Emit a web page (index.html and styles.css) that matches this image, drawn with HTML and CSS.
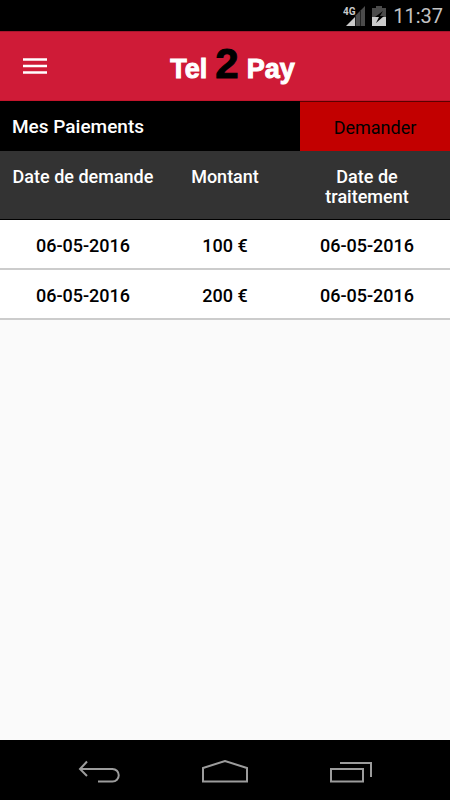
FILE: index.html
```html
<!DOCTYPE html>
<html lang="fr">
<head>
<meta charset="utf-8">
<meta name="viewport" content="width=device-width, initial-scale=1">
<title>Tel 2 Pay</title>
<link rel="stylesheet" href="styles.css">
</head>
<body>
<div class="status">
  <svg class="signal" width="22" height="20" viewBox="0 0 22 20" aria-hidden="true">
    <path d="M22 0V20H4L13 11V9L16 6Z" fill="#4b4b4b"/>
    <path d="M12 11V20H3Z" fill="#cbcbcb"/>
    <path d="M12.5 9V20M17.500 4V20" stroke="#222" fill="none"/>
    <text class="network" x="0" y="9">4G</text>
  </svg>
  <svg class="battery" width="14" height="20" viewBox="0 0 14 20" aria-hidden="true">
    <path d="M4 0H10V2H14V20H0V2H4Z" fill="#4b4b4b"/>
    <path d="M0 11H14V20H0Z" fill="#cbcbcb"/>
    <path d="M11 5L3 11H7L4 17L12 10H8Z" fill="#000"/>
  </svg>
  <time class="clock">11:37</time>
</div>
<header class="bar">
  <button class="menu" type="button" aria-label="Menu">
    <svg width="24" height="18" viewBox="0 0 24 18"><path d="M0 2.500H24M0 9H24M0 15.500H24" stroke="#fff" stroke-width="2.6"/></svg>
  </button>
  <div class="logo"><span>Tel</span><span class="two">2</span><span>Pay</span></div>
</header>
<main class="content">
  <div class="heading">
    <h1 class="title">Mes Paiements</h1>
    <button class="ask" type="button">Demander</button>
  </div>
  <table class="payments">
    <thead>
      <tr><th class="edge"></th><th>Date de demande</th><th>Montant</th><th>Date de traitement</th><th class="edge"></th></tr>
    </thead>
    <tbody>
      <tr><td></td><td>06-05-2016</td><td>100 €</td><td>06-05-2016</td><td></td></tr>
      <tr><td></td><td>06-05-2016</td><td>200 €</td><td>06-05-2016</td><td></td></tr>
    </tbody>
  </table>
</main>
<nav class="system">
  <button type="button" aria-label="Retour">
    <svg width="44" height="26" viewBox="0 0 44 26"><path d="M10 1.500L3 9L10 16M3 9H35.500A6.250 6.250 0 0 1 35.500 21.500H21"/></svg>
  </button>
  <button type="button" aria-label="Accueil">
    <svg width="46" height="26" viewBox="0 0 46 26"><path d="M1 21.500V8L23 1L45 8V21.500Z"/></svg>
  </button>
  <button type="button" aria-label="Applications">
    <svg width="44" height="26" viewBox="0 0 44 26"><path d="M2 9H34V21.500H2ZM11 3H42V17"/></svg>
  </button>
</nav>
</body>
</html>
```
FILE: styles.css
```css
* {
  box-sizing: border-box;
}

body {
  margin: 0;
  min-height: 100vh;
  display: flex;
  flex-direction: column;
  background: #fafafa;
  font-family: Roboto, "Liberation Sans", sans-serif;
  font-size: 18px;
  line-height: 20px;
  color: #000;
}

button {
  padding: 0;
  border: 0;
  background: none;
  font: inherit;
  color: inherit;
  cursor: pointer;
}

svg {
  display: block;
}

.status {
  display: flex;
  align-items: center;
  justify-content: flex-end;
  gap: 7px;
  height: 31px;
  padding: 0 7px;
  background: #000;
}

.network {
  font-size: 10px;
  font-weight: 700;
  fill: #cbcbcb;
}

.clock {
  font-size: 20px;
  color: #c4c4c4;
}

.bar {
  display: grid;
  grid-template-columns: 1fr auto 1fr;
  align-items: center;
  height: 70px;
  padding: 0 15px;
  background: #cf1b37;
  border-top: 1px solid #a8162d;
  border-bottom: 1px solid #c4152c;
}

.menu {
  justify-self: start;
  padding: 8px;
}

.logo {
  grid-column: 2;
  display: flex;
  align-items: baseline;
  gap: 8px;
  margin-left: 15px;
  font-family: "Liberation Sans", Arial, sans-serif;
  font-size: 27px;
  font-weight: 700;
  line-height: 40px;
  color: #fff;
  -webkit-text-stroke: 1px currentColor;
}

.two {
  font-size: 42px;
  color: #000;
}

.content {
  flex: 1;
}

.heading {
  display: grid;
  grid-template-columns: 2fr 1fr;
  height: 50px;
  background: #000;
}

.title {
  margin: 0;
  padding: 16px 12px 0;
  font-size: 19px;
  font-weight: 500;
  line-height: 20px;
  color: #fff;
}

.ask {
  padding-top: 2px;
  border-top: 1px solid #5c0000;
  background: #c20000;
}

.payments {
  width: 100%;
  table-layout: fixed;
  border-collapse: separate;
  border-spacing: 0;
  text-align: center;
  font-weight: 500;
}

.payments th {
  height: 69px;
  padding: 16px 0 0;
  vertical-align: top;
  font-weight: 500;
  color: #fff;
  background: #333;
  border-bottom: 1px solid #000;
}

.payments .edge {
  width: 12px;
}

.payments td {
  height: 50px;
  padding: 4px 0 0;
  background: #fff;
  border-bottom: 2px solid #ccc;
}

.system {
  display: flex;
  justify-content: center;
  gap: 80px;
  height: 60px;
  padding-top: 5px;
  background: #000;
}

.system button {
  width: 46px;
}

.system svg {
  margin: 0 auto;
  fill: none;
  stroke: #9c9c9c;
  stroke-width: 2;
}
```
